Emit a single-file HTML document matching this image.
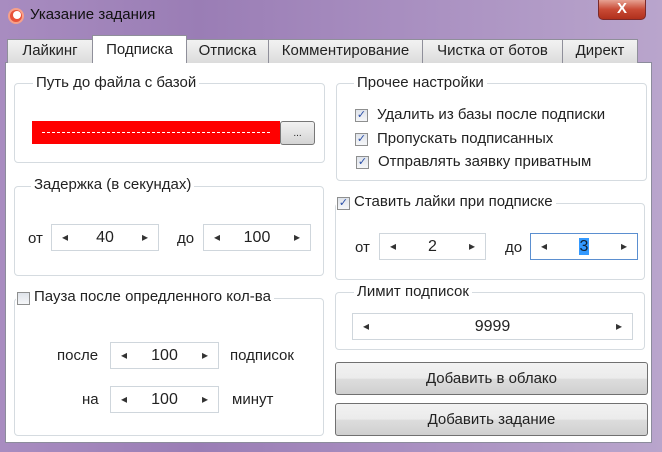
<!DOCTYPE html>
<html><head><meta charset="utf-8"><style>
*{box-sizing:border-box;margin:0;padding:0}
body{width:662px;height:452px;overflow:hidden;font-family:"Liberation Sans","DejaVu Sans",sans-serif;font-size:15px;color:#222;position:relative;
background:linear-gradient(90deg,#a88cc0 0%,#9a7db5 30%,#a88ec0 60%,#b9a5cc 100%)}
.a{position:absolute}
.panel{position:absolute;left:5px;top:62px;width:647px;height:381px;background:#fff;border:1px solid #8c8c9c}
.tab{position:absolute;top:39px;height:24px;background:linear-gradient(#f2f2f2,#dcdcdc);border:1px solid #8f8f9a;border-bottom:none;text-align:center;line-height:22px;font-size:15px}
.tab.sel{top:35px;height:28px;background:#fff;line-height:28px;z-index:2}
.grp{position:absolute;border:1px solid #d5dbe0;border-radius:4px}
.lg{position:absolute;background:#fff;padding:0 3px;font-size:15px;white-space:nowrap}
.spin{position:absolute;border:1px solid #cfd6dc;background:#fff;height:27px;line-height:25px;text-align:center;font-size:16px}
.spin:before{content:"◂";position:absolute;left:10px;font-size:12px;color:#333}
.spin:after{content:"▸";position:absolute;right:10px;font-size:12px;color:#333}
.t{position:absolute;font-size:15px;white-space:nowrap}
.cb{position:absolute;width:13px;height:13px;border:1px solid #8e8f8f;background:linear-gradient(#dfe3ea,#f5f6f8);font-size:11px;line-height:11px;text-align:center;color:#2a4fa8;font-weight:bold}
.btn{position:absolute;left:335px;width:313px;height:33px;border:1px solid #707070;border-radius:3px;background:linear-gradient(#f2f2f2 0%,#ebebeb 50%,#dddddd 51%,#cfcfcf 100%);text-align:center;line-height:31px;font-size:15px}
</style></head><body>
<div class="a" style="left:8px;top:8px;width:16px;height:16px;border-radius:50%;background:#e8533a;border:2px solid #f7a08a"></div>
<div class="a" style="left:13px;top:11px;width:8px;height:8px;border-radius:50%;background:#fff"></div>
<div class="t" style="left:30px;top:6px;font-size:15px;color:#111">Указание задания</div>
<div class="a" style="left:598px;top:0;width:48px;height:20px;border:1px solid #7a2a2a;border-top:none;border-radius:0 0 5px 5px;background:linear-gradient(#e6a293,#c94a35 50%,#b0301c);color:#fff;text-align:center;font-weight:bold;line-height:18px">X</div>
<div class="panel"></div>
<div class="tab" style="left:7px;width:86px">Лайкинг</div>
<div class="tab sel" style="left:92px;width:95px">Подписка</div>
<div class="tab" style="left:186px;width:83px">Отписка</div>
<div class="tab" style="left:268px;width:155px">Комментирование</div>
<div class="tab" style="left:422px;width:141px">Чистка от ботов</div>
<div class="tab" style="left:562px;width:76px">Директ</div>

<div class="grp" style="left:14px;top:83px;width:311px;height:80px"></div>
<div class="lg" style="left:33px;top:74px">Путь до файла с базой</div>
<div class="a" style="left:32px;top:121px;width:248px;height:23px;background:#f00"></div>
<div class="a" style="left:42px;top:132px;width:228px;border-top:1px dashed #fff"></div>
<div class="a" style="left:280px;top:121px;width:35px;height:24px;border:1px solid #777;border-radius:3px;background:linear-gradient(#f2f2f2,#d4d4d4);text-align:center;font-size:10px;line-height:24px">...</div>

<div class="grp" style="left:14px;top:186px;width:310px;height:90px"></div>
<div class="lg" style="left:31px;top:176px">Задержка (в секундах)</div>
<div class="t" style="left:28px;top:230px">от</div>
<div class="spin" style="left:51px;top:224px;width:108px">40</div>
<div class="t" style="left:177px;top:230px">до</div>
<div class="spin" style="left:203px;top:224px;width:108px">100</div>

<div class="grp" style="left:14px;top:298px;width:310px;height:138px"></div>
<div class="lg" style="left:16px;top:288px;padding-left:18px">Пауза после опредленного кол-ва</div>
<div class="cb" style="left:17px;top:292px"></div>
<div class="t" style="left:57px;top:347px">после</div>
<div class="spin" style="left:110px;top:342px;width:109px">100</div>
<div class="t" style="left:230px;top:347px">подписок</div>
<div class="t" style="left:82px;top:391px">на</div>
<div class="spin" style="left:110px;top:386px;width:109px">100</div>
<div class="t" style="left:232px;top:391px">минут</div>

<div class="grp" style="left:336px;top:83px;width:311px;height:98px"></div>
<div class="lg" style="left:354px;top:74px">Прочее настройки</div>
<div class="cb" style="left:355px;top:109px">✓</div><div class="t" style="left:377px;top:106px">Удалить из базы после подписки</div>
<div class="cb" style="left:355px;top:133px">✓</div><div class="t" style="left:377px;top:130px">Пропускать подписанных</div>
<div class="cb" style="left:356px;top:156px">✓</div><div class="t" style="left:378px;top:153px">Отправлять заявку приватным</div>

<div class="grp" style="left:335px;top:203px;width:310px;height:77px"></div>
<div class="lg" style="left:336px;top:193px;padding-left:18px">Ставить лайки при подписке</div>
<div class="cb" style="left:337px;top:197px">✓</div>
<div class="t" style="left:355px;top:239px">от</div>
<div class="spin" style="left:379px;top:233px;width:107px">2</div>
<div class="t" style="left:505px;top:239px">до</div>
<div class="spin" style="left:530px;top:233px;width:108px;border-color:#5b8fd0"><span style="background:#3399ff;color:#123;padding:0 1px">3</span></div>

<div class="grp" style="left:335px;top:292px;width:310px;height:58px"></div>
<div class="lg" style="left:354px;top:283px">Лимит подписок</div>
<div class="spin" style="left:352px;top:313px;width:281px">9999</div>

<div class="btn" style="top:362px">Добавить в облако</div>
<div class="btn" style="top:403px">Добавить задание</div>
</body></html>
